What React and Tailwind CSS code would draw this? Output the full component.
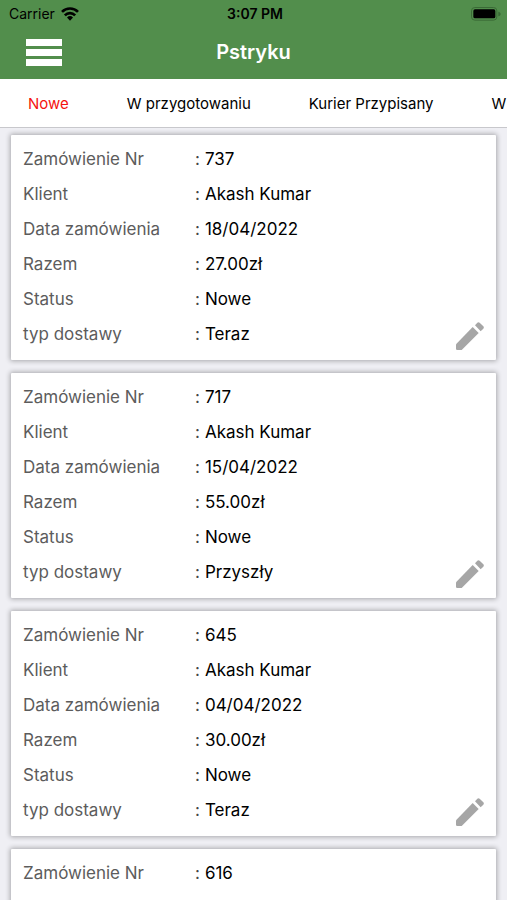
import { useState } from 'react';

const tabs = ['Nowe', 'W przygotowaniu', 'Kurier Przypisany', 'W drodze'];

const orders = [
  { id: '737', client: 'Akash Kumar', date: '18/04/2022', total: '27.00zł', status: 'Nowe', delivery: 'Teraz' },
  { id: '717', client: 'Akash Kumar', date: '15/04/2022', total: '55.00zł', status: 'Nowe', delivery: 'Przyszły' },
  { id: '645', client: 'Akash Kumar', date: '04/04/2022', total: '30.00zł', status: 'Nowe', delivery: 'Teraz' },
  { id: '616', client: 'Akash Kumar', date: '01/04/2022', total: '30.00zł', status: 'Nowe', delivery: 'Teraz' },
];

const fields = [
  { key: 'id', label: 'Zamówienie Nr' },
  { key: 'client', label: 'Klient' },
  { key: 'date', label: 'Data zamówienia' },
  { key: 'total', label: 'Razem' },
  { key: 'status', label: 'Status' },
  { key: 'delivery', label: 'typ dostawy' },
];

const WifiIcon = () => (
  <svg viewBox="0 0 54 42" className="h-[14px] w-[18px]" aria-hidden="true">
    <g fill="none" stroke="#000" strokeWidth="8">
      <path d="M3 14.5a34 34 0 0 1 48 0" />
      <path d="M11.500 25a22 22 0 0 1 31 0" />
    </g>
    <path d="M27 41l-9-9.500a13 13 0 0 1 18 0z" />
  </svg>
);

const BatteryIcon = () => (
  <svg viewBox="0 0 90 42" className="h-[14px] w-[30px]" aria-hidden="true">
    <rect x="1.500" y="1.500" width="76" height="38" rx="10" fill="none" stroke="#3a6b36" strokeWidth="3" />
    <rect x="7" y="7" width="66" height="27" rx="5" />
    <path d="M82 14c4 1 7 4 7 7s-3 6-7 7z" fill="#3a6b36" />
  </svg>
);

const PencilIcon = () => (
  <svg viewBox="0 0 84 84" className="h-7 w-7" fill="#a6a6a6" aria-hidden="true">
    <path d="M0 67v13q0 4 4 4h13l51-51L50 15z" />
    <path d="M57 10l7-8q3-3 7 0l11 11q3 3 0 7l-8 8z" />
  </svg>
);

const OrderCard = ({ order }) => (
  <article className="relative rounded-[1px] bg-white pt-[7px] pr-3 pb-2 pl-3 shadow-[0_0_5px_1px_rgba(0,0,0,0.3)]">
    <dl>
      {fields.map(({ key, label }) => (
        <div key={key} className="flex h-[35px] items-center text-[17px]">
          <dt className="w-[172px] shrink-0 text-[#5c5c5c]">{label}</dt>
          <dd className="flex gap-[5px] text-black">
            <span className="text-[#444]">:</span>
            {order[key]}
          </dd>
        </div>
      ))}
    </dl>
    {/* Edit action sits over the last row */}
    <button type="button" aria-label={`Edytuj ${order.id}`} className="absolute right-3 bottom-[10px]">
      <PencilIcon />
    </button>
  </article>
);

const App = () => {
  const [activeTab, setActiveTab] = useState(0);

  return (
    <div className="flex h-screen flex-col overflow-hidden bg-[#efeff4] font-['Inter',sans-serif] text-black">
      <header className="bg-[#528e4c]">
        {/* Status bar */}
        <div className="grid h-7 grid-cols-3 items-center pr-[6px] pb-px pl-[9px] text-[14px]">
          <div className="flex items-center gap-[6px]">
            <span>Carrier</span>
            <WifiIcon />
          </div>
          <span className="text-center font-semibold">3:07 PM</span>
          <div className="flex justify-end">
            <BatteryIcon />
          </div>
        </div>

        {/* Title bar */}
        <div className="grid h-[51px] grid-cols-3 items-center px-[26px] pb-[3px]">
          <button type="button" aria-label="Menu" className="flex w-9 flex-col gap-[3px]">
            <span className="h-[7px] w-full bg-white"></span>
            <span className="h-[7px] w-full bg-white"></span>
            <span className="h-[7px] w-full bg-white"></span>
          </button>
          <h1 className="text-center text-[20px] font-semibold text-white">Pstryku</h1>
        </div>
      </header>

      <nav className="flex h-[49px] shrink-0 gap-[58px] overflow-hidden border-b border-[#c8c8cc] bg-white px-7 pt-[3px]">
        {tabs.map((tab, i) => (
          <button
            key={tab}
            type="button"
            onClick={() => setActiveTab(i)}
            className={`shrink-0 text-[15px] whitespace-nowrap ${i === activeTab ? 'text-[#f5130f]' : 'text-black'}`}
          >
            {tab}
          </button>
        ))}
      </nav>

      <main className="flex min-h-0 flex-1 flex-col gap-[13px] overflow-y-auto px-[11px] pt-[7px] pb-3 [scrollbar-width:none]">
        {orders.map((order) => (
          <OrderCard key={order.id} order={order} />
        ))}
      </main>
    </div>
  );
};

export default App;
